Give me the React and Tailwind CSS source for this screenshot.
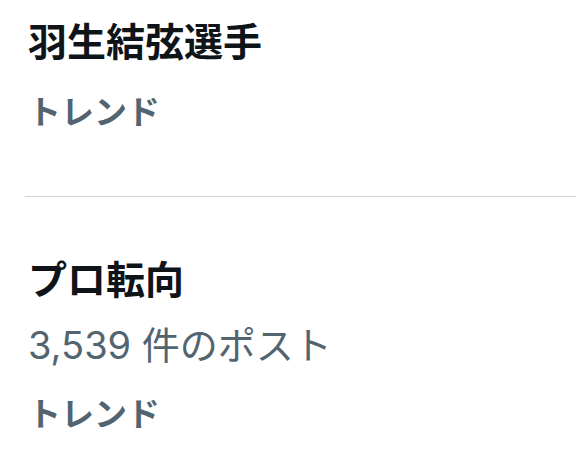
import React from "react";

const trends = [
  { title: "羽生結弦選手", count: null, label: "トレンド" },
  { title: "プロ転向", count: "3,539 件のポスト", label: "トレンド" },
];

export default function App() {
  return (
    <div className="w-[576px] h-[451px] overflow-hidden bg-white font-['Inter','Noto_Sans_CJK_JP',sans-serif]">
      {/* first trend */}
      <div className="pl-[28px] pt-[14px]">
        <p className="text-[39px] leading-[56px] font-bold text-[#0f1419]">{trends[0].title}</p>
        <p className="mt-[14px] text-[33px] leading-[56px] font-bold text-[#536471]">{trends[0].label}</p>
      </div>

      <div className="ml-[25px] mt-[56px] border-t border-[#cfd4d8]" />

      {/* second trend */}
      <div className="pl-[28px] pt-[55px]">
        <p className="text-[39px] leading-[56px] font-bold text-[#0f1419]">{trends[1].title}</p>
        <p className="mt-[9px] text-[38px] leading-[56px] text-[#536471]">{trends[1].count}</p>
        <p className="mt-[13px] text-[33px] leading-[56px] font-bold text-[#536471]">{trends[1].label}</p>
      </div>
    </div>
  );
}
